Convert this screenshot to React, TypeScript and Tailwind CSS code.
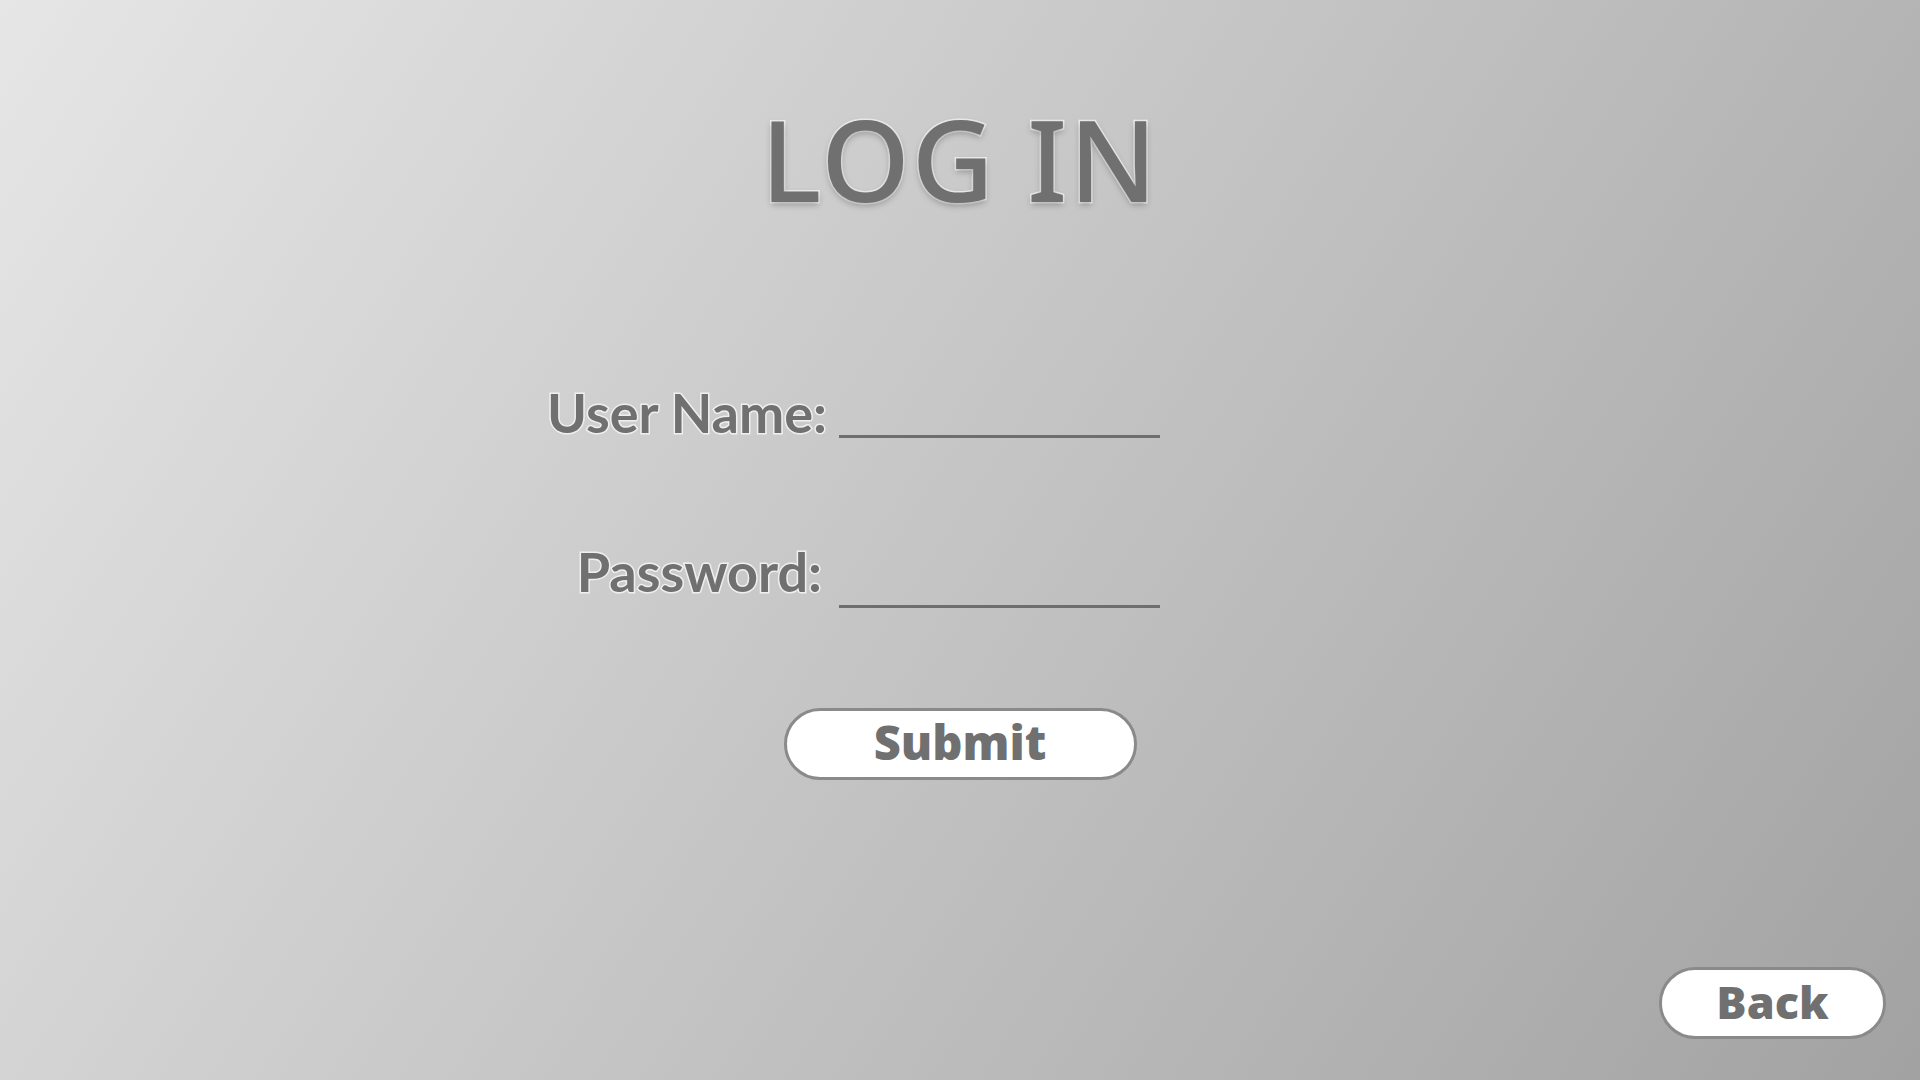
import React from "react";

const outline =
  "[paint-order:stroke_fill] [-webkit-text-stroke:3px_#efefef]";

function Field({
  label,
  labelClass,
  lineOffset,
}: {
  label: string;
  labelClass: string;
  lineOffset: string;
}) {
  return (
    <div className="contents">
      <label
        className={`justify-self-end text-[54px] font-bold leading-none text-[#707070] ${outline} ${labelClass}`}
      >
        {label}
      </label>
      <div className={`h-[3px] w-[321px] self-end bg-[#6e6e6e] ${lineOffset}`} />
    </div>
  );
}

function PillButton({
  children,
  className,
}: {
  children: React.ReactNode;
  className: string;
}) {
  return (
    <button
      className={`flex h-[72px] items-center justify-center rounded-full border-[3px] border-[#8a8a8a] bg-white font-['Noto_Sans',sans-serif] font-black leading-none text-[#707070] ${className}`}
    >
      {children}
    </button>
  );
}

export default function App() {
  return (
    <div className="flex h-screen w-full flex-col bg-[linear-gradient(123deg,#e6e6e6,#a2a2a2)] font-['Lato','Noto_Sans',sans-serif]">
      <h1
        className={`mt-[102px] text-center font-['Noto_Sans',sans-serif] text-[113px] font-medium leading-none tracking-[2px] text-[#707070] ${outline} [text-shadow:0_3px_6px_rgba(0,0,0,0.25)]`}
      >
        LOG IN
      </h1>

      <div className="mt-[171px] grid grid-cols-[827px_321px] items-end gap-x-[12px] gap-y-[105px]">
        <Field label="User Name:" labelClass="" lineOffset="mb-[2px]" />
        <Field label="Password:" labelClass="mr-[5px]" lineOffset="mb-[-9px]" />
      </div>

      <PillButton className="mx-auto mt-[109px] w-[353px] pb-[4px] text-[47px]">
        Submit
      </PillButton>

      <div className="mt-auto flex justify-end pb-[41px] pr-[34px]">
        <PillButton className="w-[227px] pb-[4px] text-[45px]">Back</PillButton>
      </div>
    </div>
  );
}
